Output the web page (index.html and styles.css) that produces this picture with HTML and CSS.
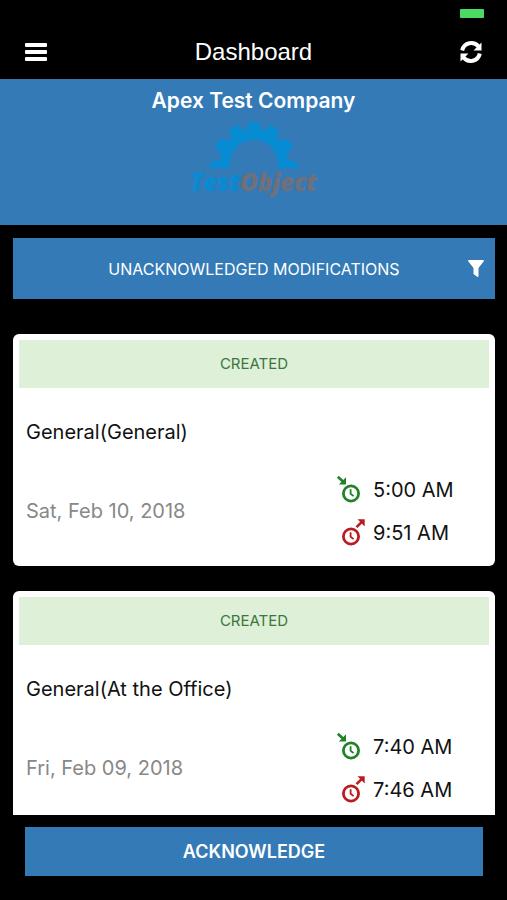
FILE: index.html
```html
<!DOCTYPE html>
<html lang="en">
<head>
<meta charset="utf-8">
<meta name="viewport" content="width=device-width, initial-scale=1">
<title>Dashboard</title>
<link rel="stylesheet" href="styles.css">
</head>
<body>
<svg class="sprite" aria-hidden="true">
  <symbol id="clock-in" viewBox="0 0 30 30">
    <circle cx="15" cy="18.500" r="7.6" fill="none" stroke="currentColor" stroke-width="2.8"/>
    <path d="M14.6 14.300v4.4l3 2.4" fill="none" stroke="currentColor" stroke-width="1.8"/>
    <path d="M1.8 1.800l5.4 5" fill="none" stroke="currentColor" stroke-width="2.6"/>
    <path d="M10 2.200v7.2H2.800z" fill="currentColor"/>
  </symbol>
  <symbol id="clock-out" viewBox="0 0 30 30">
    <circle cx="15" cy="18.500" r="7.6" fill="none" stroke="currentColor" stroke-width="2.8"/>
    <path d="M14.6 14.300v4.4l3 2.4" fill="none" stroke="currentColor" stroke-width="1.8"/>
    <path d="M20.500 9.200l5.400-5.400" fill="none" stroke="currentColor" stroke-width="2.6"/>
    <path d="M21.500 1.2h7.200v7.200z" fill="currentColor"/>
  </symbol>
</svg>
<div class="screen">
  <div class="status"><span class="battery"></span></div>
  <header class="topbar">
    <button class="icon-button" aria-label="Menu">
      <svg width="22" height="18" viewBox="0 0 22 18" fill="#fff"><rect width="22" height="4" rx="1"/><rect y="7" width="22" height="4" rx="1"/><rect y="14" width="22" height="4" rx="1"/></svg>
    </button>
    <h1>Dashboard</h1>
    <button class="icon-button" aria-label="Refresh">
      <svg width="22" height="22" viewBox="0 0 22 22"><path d="M2.200 9.500C4 1 14 0 18.500 5.500M19.800 12.500C18 21 8 22 3.500 16.500" fill="none" stroke="#fff" stroke-width="4"/><path d="M21.500 1.500v8h-8zM.5 20.500v-8h8z" fill="#fff"/></svg>
    </button>
  </header>
  <section class="banner">
    <h2>Apex Test Company</h2>
    <svg class="gear" width="88" height="48" viewBox="0 0 88 48" fill="#078bd2" aria-hidden="true">
      <path d="M10 47C8 24 24 8 44 8s36 16 34 39H68V43C68 28 57 19 44 19S20 28 20 43v4z"/>
      <path d="M0 47v-4q0-2 2-2l10-3 8 2v7zM88 47v-4q0-2-2-2l-10-3-8 2v7z"/>
      <path id="tooth" d="M36 13l2-9q0-3 3-3h6q3 0 3 3l2 9z"/>
      <use href="#tooth" transform="rotate(29 44 43)"/>
      <use href="#tooth" transform="rotate(-29 44 43)"/>
      <use href="#tooth" transform="rotate(60 44 43)"/>
      <use href="#tooth" transform="rotate(-60 44 43)"/>
    </svg>
    <p class="brand"><span>Test</span>Object</p>
  </section>
  <button class="filter">
    <span>UNACKNOWLEDGED MODIFICATIONS</span>
    <svg width="16" height="17" viewBox="0 0 16 17" fill="#fff" aria-hidden="true"><path d="M1 0h14q1 0 1 1L10.500 8v8q0 1-1 1L5.500 14V8L0 1q0-1 1-1z"/></svg>
  </button>
  <main class="list">
    <article class="card">
      <p class="state">CREATED</p>
      <h3>General(General)</h3>
      <div class="details">
        <p class="date">Sat, Feb 10, 2018</p>
        <ul class="times">
          <li><svg class="in" aria-hidden="true"><use href="#clock-in"/></svg>5:00 AM</li>
          <li><svg class="out" aria-hidden="true"><use href="#clock-out"/></svg>9:51 AM</li>
        </ul>
      </div>
    </article>
    <article class="card">
      <p class="state">CREATED</p>
      <h3>General(At the Office)</h3>
      <div class="details">
        <p class="date">Fri, Feb 09, 2018</p>
        <ul class="times">
          <li><svg class="in" aria-hidden="true"><use href="#clock-in"/></svg>7:40 AM</li>
          <li><svg class="out" aria-hidden="true"><use href="#clock-out"/></svg>7:46 AM</li>
        </ul>
      </div>
    </article>
  </main>
  <footer class="footer"><button class="acknowledge">ACKNOWLEDGE</button></footer>
</div>
</body>
</html>
```

FILE: styles.css
```css
* { box-sizing: border-box; margin: 0; padding: 0; }
body { background: #000; font-family: Inter, "Liberation Sans", sans-serif; font-size: 20px; }
button { border: 0; background: none; font: inherit; color: #fff; cursor: pointer; }
svg { display: block; flex: none; }
.sprite { position: absolute; width: 0; height: 0; }
.screen { display: flex; flex-direction: column; height: 100vh; overflow: hidden; }
.status { display: flex; justify-content: flex-end; height: 24px; padding: 9px 23px 0; }
.battery { width: 24px; height: 9px; border-radius: 1px; background: #4cd964; }
.topbar { display: flex; align-items: center; justify-content: space-between; height: 55px; padding: 0 24px; }
.topbar h1 { color: #fff; font: 400 24px/28px "Liberation Sans", sans-serif; }
.icon-button { display: flex; align-items: center; justify-content: center; width: 24px; height: 32px; }
.banner { display: flex; flex-direction: column; align-items: center; height: 146px; padding-top: 8px; background: #337ab7; }
.banner h2 { color: #fff; font-size: 21px; line-height: 28px; font-weight: 600; }
.gear { margin-top: 6px; }
.brand { color: #70707a; font: italic 800 24px/26px "Open Sans", sans-serif; }
.brand span { color: #078bd2; }
.filter { display: grid; grid-template-columns: 1fr auto 1fr; align-items: center; flex: none; height: 61px; margin: 13px 12px 0 13px; padding: 0 11px; background: #337ab7; font-size: 16px; }
.filter span { grid-column: 2; }
.filter svg { justify-self: end; }
.list { flex: 1; min-height: 0; overflow: hidden; margin-top: 35px; padding: 0 12px 0 13px; }
.card { height: 232px; margin-bottom: 25px; padding: 6px; border-radius: 6px; background: #fff; color: #111; }
.state { background: #dff0d8; color: #3c763d; font-size: 15px; line-height: 48px; text-align: center; }
.card h3 { margin-top: 32px; padding-left: 7px; font-size: 20px; line-height: 24px; font-weight: 400; }
.details { display: flex; align-items: center; justify-content: space-between; margin-top: 24px; padding: 0 36px 0 7px; }
.date { color: #888; }
.times { width: 117px; list-style: none; }
.times li { display: flex; align-items: center; gap: 7px; height: 43px; white-space: nowrap; }
.times svg { width: 30px; height: 30px; }
.in { color: #208328; }
.out { color: #b91c20; }
.footer { padding: 12px 24px 24px 25px; }
.acknowledge { display: block; width: 100%; height: 49px; background: #337ab7; font-size: 18px; font-weight: 600; }
```
